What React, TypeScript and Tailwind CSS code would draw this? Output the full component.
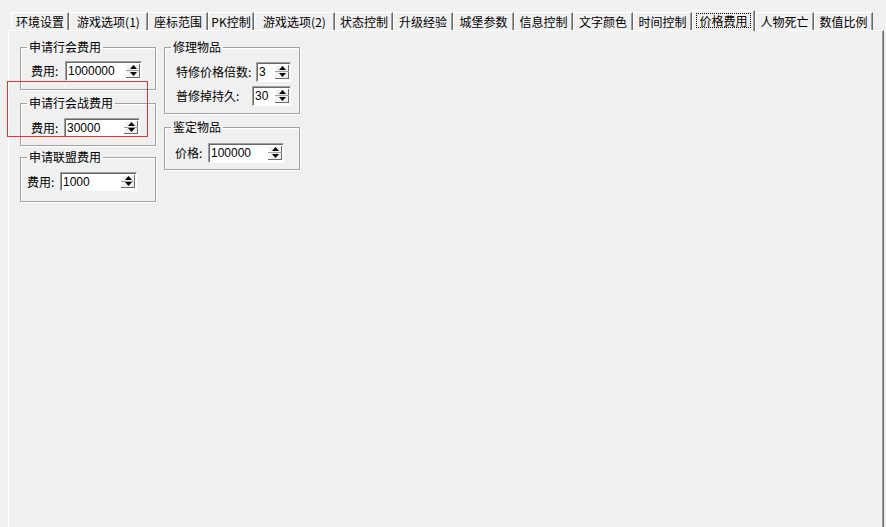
const tabs = [
  { label: '环境设置', w: 'w-[58px]' },
  { label: '游戏选项(1)', w: 'w-[79px]' },
  { label: '座标范围', w: 'w-[60px]' },
  { label: 'PK控制', w: 'w-[46px]' },
  { label: '游戏选项(2)', w: 'w-[81px]' },
  { label: '状态控制', w: 'w-[58px]' },
  { label: '升级经验', w: 'w-[60px]' },
  { label: '城堡参数', w: 'w-[61px]' },
  { label: '信息控制', w: 'w-[59px]' },
  { label: '文字颜色', w: 'w-[60px]' },
  { label: '时间控制', w: 'w-[59px]' },
  { label: '价格费用', w: 'w-[63px]', active: true },
  { label: '人物死亡', w: 'w-[59px]' },
  { label: '数值比例', w: 'w-[59px]' },
];

function Arrow({ down }: { down?: boolean }) {
  return (
    <svg width="7" height="4" viewBox="0 0 7 4" className="block">
      <polygon points={down ? '0,0 7,0 3.5,4' : '3.5,0 7,4 0,4'} fill="#000" />
    </svg>
  );
}

function SpinEdit({ value, className }: { value: string; className: string }) {
  return (
    <div
      className={`flex items-stretch bg-white border border-t-[#a0a0a0] border-l-[#a0a0a0] border-r-white border-b-white shadow-[inset_1px_1px_0_#696969] ${className}`}
    >
      <span className="flex-1 pl-[2px] pt-[2px] font-['Liberation_Sans',sans-serif] text-[12px] leading-[14px]">
        {value}
      </span>
      <div className="my-[2px] mr-[1px] w-[14px] flex flex-col bg-[#f0f0f0] shadow-[inset_-1px_-1px_0_#696969,inset_1px_1px_0_#fff]">
        <div className="flex-1 flex items-center justify-center border-b border-[#a0a0a0]">
          <Arrow />
        </div>
        <div className="flex-1 flex items-center justify-center pb-[1px]">
          <Arrow down />
        </div>
      </div>
    </div>
  );
}

function GroupBox({
  title,
  className,
  children,
}: {
  title: string;
  className: string;
  children: React.ReactNode;
}) {
  return (
    <fieldset
      className={`m-0 p-0 min-w-0 w-[136px] border border-[#a0a0a0] shadow-[inset_1px_1px_0_#fff,1px_1px_0_#fff] ${className}`}
    >
      <legend className="ml-[6px] px-[2px] leading-[12px] text-[12px]">{title}</legend>
      {children}
    </fieldset>
  );
}

export default function App() {
  return (
    <div className="relative w-[886px] h-[527px] overflow-hidden bg-[#f0f0f0] pl-[8px] pt-[12px] flex flex-col text-[12px] text-black font-['Noto_Sans_CJK_SC','Liberation_Sans',sans-serif]">
      <div className="flex items-end h-[18px] pl-[3px]">
        {tabs.map((t) =>
          t.active ? (
            <div
              key={t.label}
              className={`relative z-10 ${t.w} h-[21px] -mb-px bg-[#f0f0f0] flex items-center justify-center border-t border-l border-white border-r border-r-[#696969] shadow-[inset_-1px_0_0_#a0a0a0] pb-[2px]`}
            >
              <span className="border border-dotted border-black px-[2px] leading-[13px]">{t.label}</span>
            </div>
          ) : (
            <div
              key={t.label}
              className={`${t.w} h-[18px] flex items-center justify-center border-t border-l border-white border-r border-r-[#696969] shadow-[inset_-1px_0_0_#a0a0a0] pt-[1px] whitespace-nowrap`}
            >
              {t.label}
            </div>
          )
        )}
      </div>

      <div className="flex-1 w-[876px] border-t border-l border-white border-r border-r-[#696969] shadow-[inset_-1px_0_0_#a0a0a0] pt-[10px] pl-[11px] flex gap-[8px] items-start">
        <div className="flex flex-col">
          <GroupBox title="申请行会费用" className="h-[49px]">
            <div className="flex items-center mt-[8px] pl-[10px]">
              <span className="w-[34px]">费用:</span>
              <SpinEdit value="1000000" className="w-[77px] h-[20px]" />
            </div>
          </GroupBox>
          <GroupBox title="申请行会战费用" className="h-[49px] mt-[7px]">
            <div className="flex items-center mt-[9px] pl-[10px]">
              <span className="w-[33px]">费用:</span>
              <SpinEdit value="30000" className="w-[76px] h-[19px]" />
            </div>
          </GroupBox>
          <GroupBox title="申请联盟费用" className="h-[51px] mt-[5px]">
            <div className="flex items-center mt-[9px] pl-[6px]">
              <span className="w-[33px]">费用:</span>
              <SpinEdit value="1000" className="w-[77px] h-[19px]" />
            </div>
          </GroupBox>
        </div>

        <div className="flex flex-col">
          <GroupBox title="修理物品" className="h-[73px]">
            <div className="flex items-center mt-[9px] pl-[11px]">
              <span className="w-[80px]">特修价格倍数:</span>
              <SpinEdit value="3" className="w-[35px] h-[20px]" />
            </div>
            <div className="flex items-center mt-[4px] pl-[11px]">
              <span className="w-[76px]">普修掉持久:</span>
              <SpinEdit value="30" className="w-[39px] h-[20px]" />
            </div>
          </GroupBox>
          <GroupBox title="鉴定物品" className="h-[49px] mt-[7px]">
            <div className="flex items-center mt-[10px] pl-[10px]">
              <span className="w-[33px]">价格:</span>
              <SpinEdit value="100000" className="w-[76px] h-[20px]" />
            </div>
          </GroupBox>
        </div>
      </div>

      <div className="absolute left-[7px] top-[81px] w-[141px] h-[56px] border border-[#e63434] pointer-events-none" />
    </div>
  );
}
